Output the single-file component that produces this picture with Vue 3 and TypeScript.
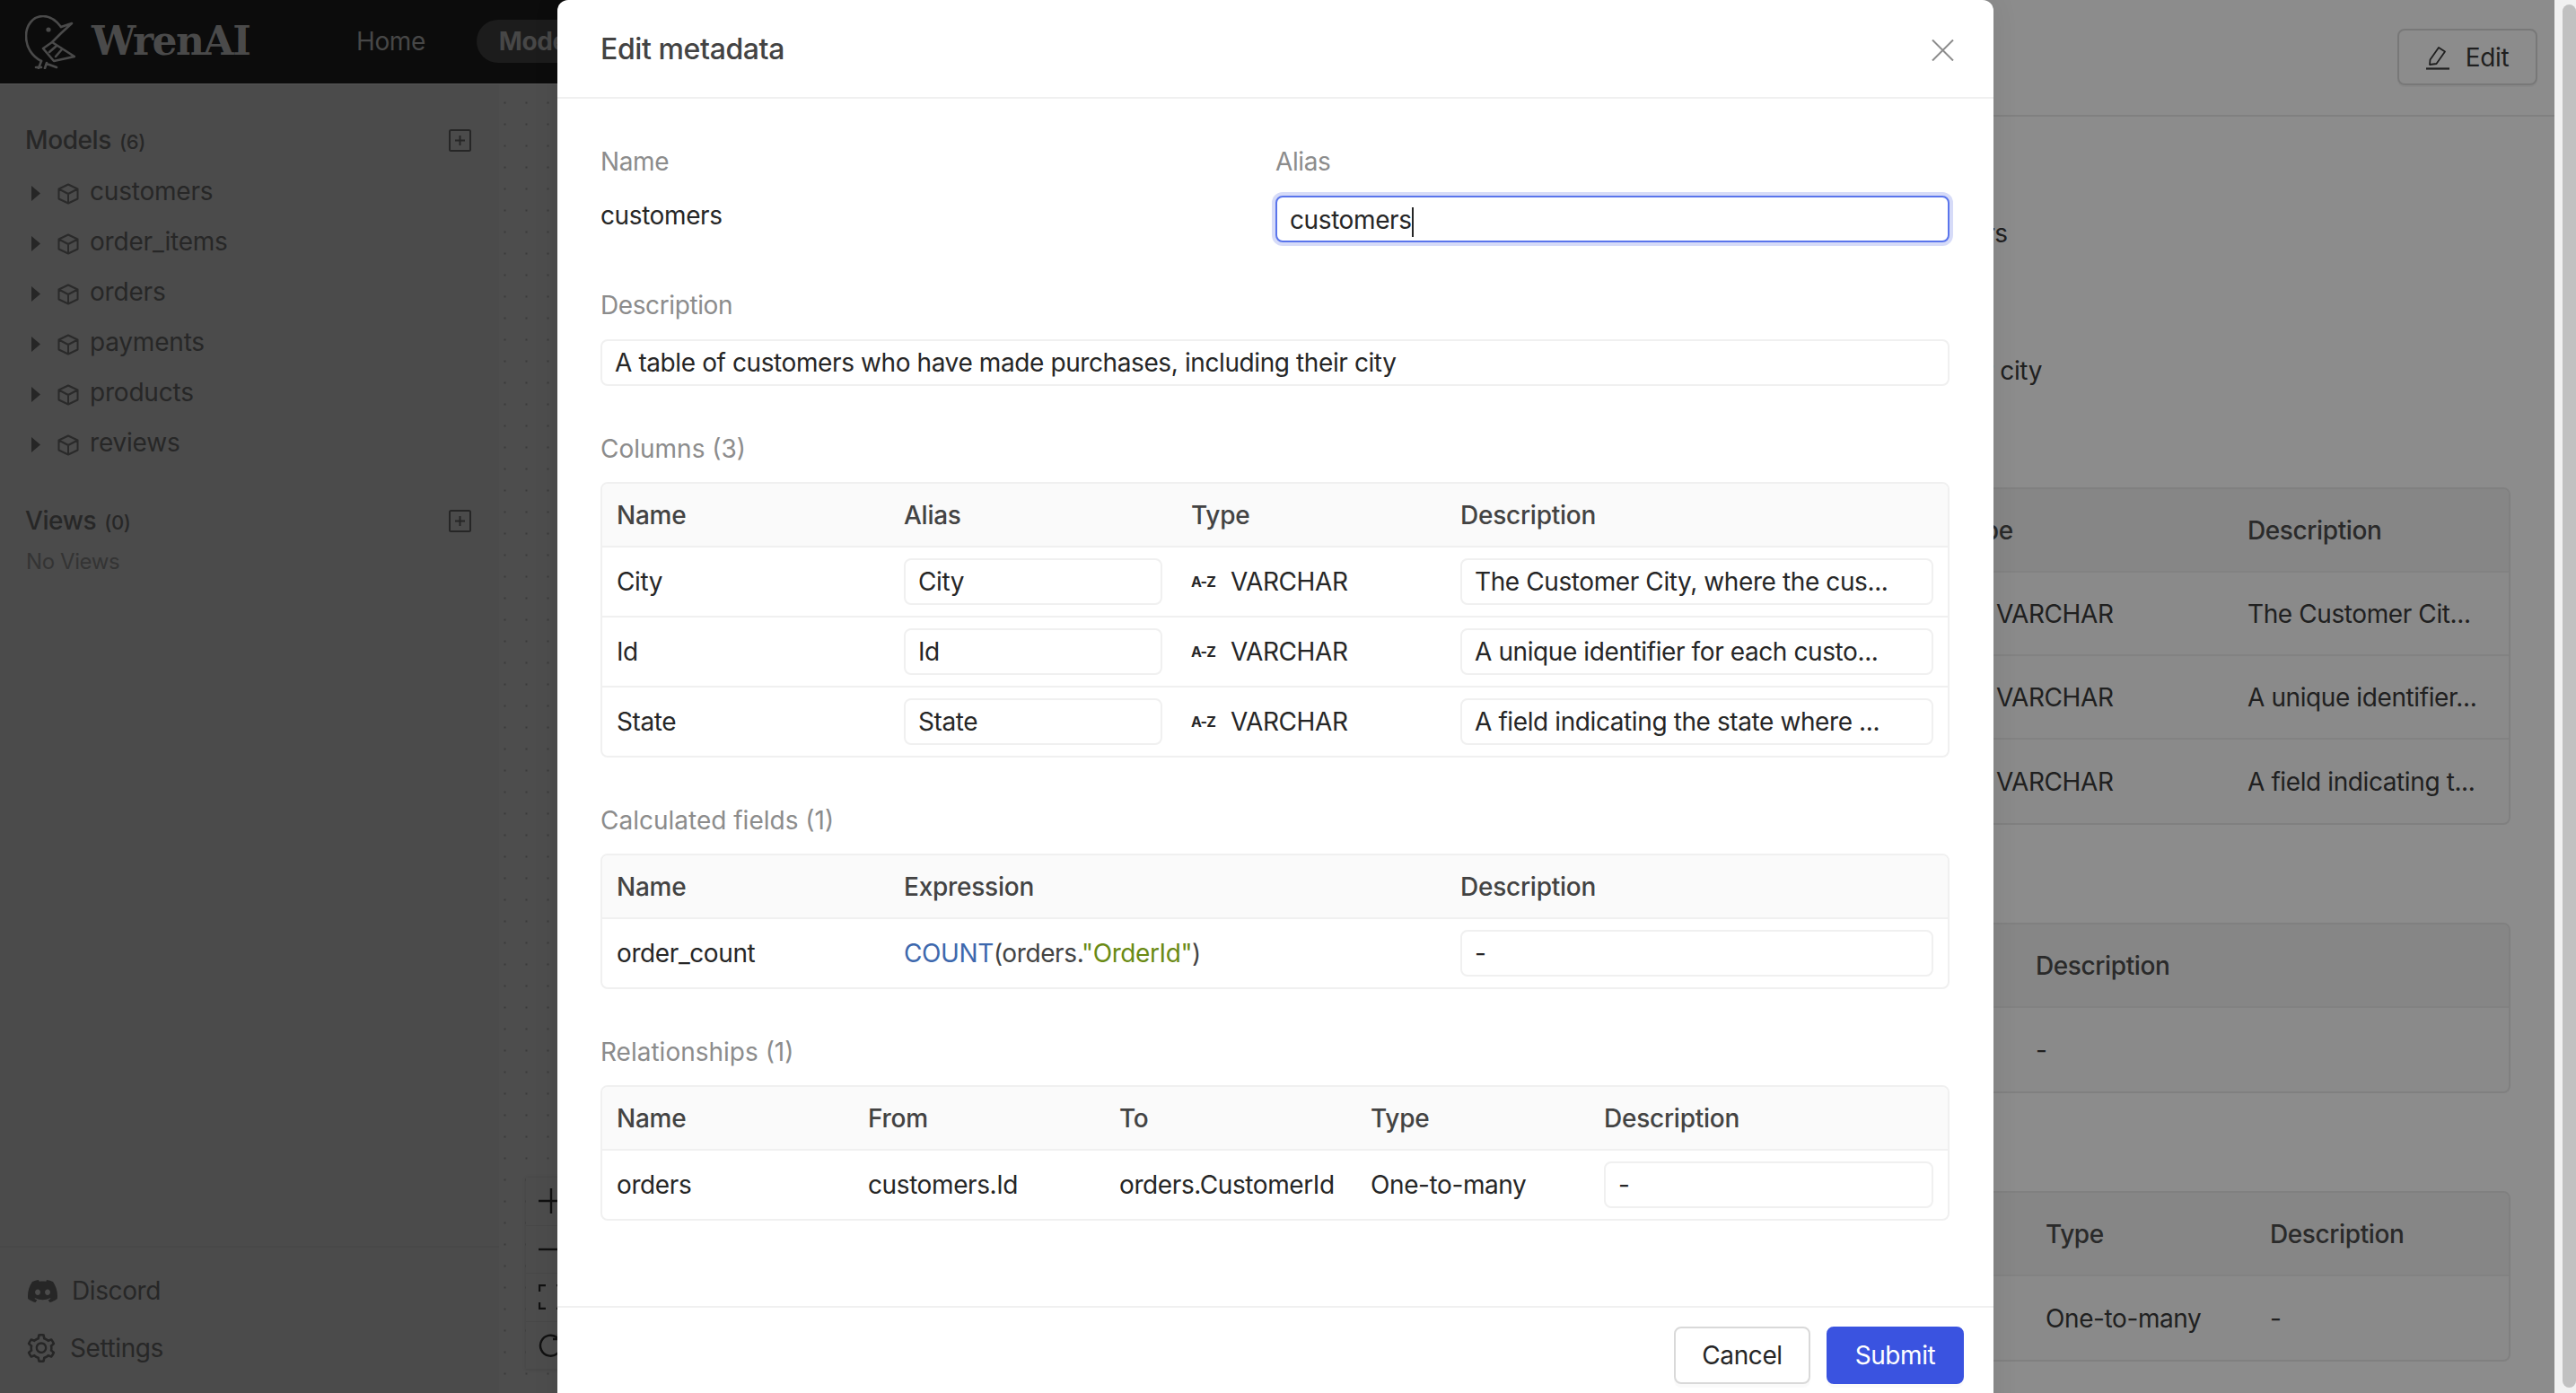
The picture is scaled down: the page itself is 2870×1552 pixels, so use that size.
<template>
  <div class="page">
    <div class="workspace">
      <header class="topbar">
        <div class="brand">
          <svg class="logo" viewBox="28 16 56 60" fill="none" stroke="#4a4a4a" stroke-width="2.6" stroke-linejoin="round" stroke-linecap="round">
            <path d="M68 29C62 21 55 17 48 17C36 17 29 28 29 39C29 52 36 62 46 67" />
            <path d="M68 29L80 25L68 36L58 46L83 62L60 67L48 53L58 46" />
            <path d="M63 50L55 57M69 54L62 62" />
            <path d="M46 67L43 75M52 69L50 75M40 74H46M52 70L63 74" />
            <circle cx="54" cy="32" r="2.6" fill="#4a4a4a" stroke="none" />
          </svg>
          <span class="brand-name">WrenAI</span>
        </div>
        <nav class="nav">
          <a class="nav-item">Home</a>
          <a class="nav-item active">Mode</a>
        </nav>
      </header>
      <div class="workspace-body">
        <aside class="sidebar">
          <div class="tree">
            <div class="tree-head">
              <span>Models <small>(6)</small></span>
              <svg class="add" viewBox="0 0 25 25" fill="none" stroke="#262626" stroke-width="2"><rect x="1" y="1" width="23" height="23" rx="1.5" /><path d="M12.5 7V18M7 12.5H18" /></svg>
            </div>
            <div v-for="m in models" :key="m" class="tree-row">
              <svg class="caret" viewBox="0 0 10 17"><path d="M0 0L10 8.5L0 17Z" fill="#262626" /></svg>
              <svg class="cube" viewBox="0 0 24 24" fill="none" stroke="#2a2a2a" stroke-width="2" stroke-linejoin="round"><path d="M12 1.5L22.5 6.5V17.5L12 22.5L1.5 17.5V6.5ZM1.5 6.5L12 12L22.5 6.5M12 12V22.5" /></svg>
              <span>{{ m }}</span>
            </div>
            <div class="tree-head views">
              <span>Views <small>(0)</small></span>
              <svg class="add" viewBox="0 0 25 25" fill="none" stroke="#262626" stroke-width="2"><rect x="1" y="1" width="23" height="23" rx="1.5" /><path d="M12.5 7V18M7 12.5H18" /></svg>
            </div>
            <div class="no-views">No Views</div>
          </div>
          <div class="side-foot">
            <div class="foot-row">
              <svg class="discord" viewBox="0 0 24 24" fill="#262626"><path d="M20.317 4.3698a19.7913 19.7913 0 00-4.8851-1.5152.0741.0741 0 00-.0785.0371c-.211.3753-.4447.8648-.6083 1.2495-1.8447-.2762-3.68-.2762-5.4868 0-.1636-.3933-.4058-.8742-.6177-1.2495a.077.077 0 00-.0785-.037 19.7363 19.7363 0 00-4.8852 1.515.0699.0699 0 00-.0321.0277C.5334 9.0458-.319 13.5799.0992 18.0578a.0824.0824 0 00.0312.0561c2.0528 1.5076 4.0413 2.4228 5.9929 3.0294a.0777.0777 0 00.0842-.0276c.4616-.6304.8731-1.2952 1.226-1.9942a.076.076 0 00-.0416-.1057c-.6528-.2476-1.2743-.5495-1.8722-.8923a.077.077 0 01-.0076-.1277c.1258-.0943.2517-.1923.3718-.2914a.0743.0743 0 01.0776-.0105c3.9278 1.7933 8.18 1.7933 12.0614 0a.0739.0739 0 01.0785.0095c.1202.099.246.1981.3728.2924a.077.077 0 01-.0066.1276 12.2986 12.2986 0 01-1.873.8914.0766.0766 0 00-.0407.1067c.3604.698.7719 1.3628 1.225 1.9932a.076.076 0 00.0842.0286c1.961-.6067 3.9495-1.5219 6.0023-3.0294a.077.077 0 00.0313-.0552c.5004-5.177-.8382-9.6739-3.5485-13.6604a.061.061 0 00-.0312-.0286zM8.02 15.3312c-1.1825 0-2.1569-1.0857-2.1569-2.419 0-1.3332.9555-2.4189 2.157-2.4189 1.2108 0 2.1757 1.0952 2.1568 2.419 0 1.3332-.9555 2.4189-2.1569 2.4189zm7.9748 0c-1.1825 0-2.1569-1.0857-2.1569-2.419 0-1.3332.9554-2.4189 2.1569-2.4189 1.2108 0 2.1757 1.0952 2.1568 2.419 0 1.3332-.946 2.4189-2.1568 2.4189Z" /></svg>
              <span>Discord</span>
            </div>
            <div class="foot-row">
              <svg class="gear" viewBox="64 64 896 896" fill="#262626"><path d="M924.8 625.7l-65.5-56c3.1-19 4.7-38.4 4.7-57.8s-1.6-38.8-4.7-57.8l65.5-56a32.03 32.03 0 009.3-35.2l-.9-2.6a443.74 443.74 0 00-79.7-137.9l-1.8-2.1a32.12 32.12 0 00-35.1-9.5l-81.3 28.9c-30-24.6-63.5-44-99.7-57.6l-15.7-85a32.05 32.05 0 00-25.8-25.7l-2.7-.5c-52.1-9.4-106.9-9.4-159 0l-2.7.5a32.05 32.05 0 00-25.8 25.7l-15.8 85.4a351.86 351.86 0 00-99 57.4l-81.9-29.1a32 32 0 00-35.1 9.5l-1.8 2.1a446.02 446.02 0 00-79.7 137.9l-.9 2.6c-4.5 12.5-.8 26.5 9.3 35.2l66.3 56.6c-3.1 18.8-4.6 38-4.6 57.1 0 19.2 1.5 38.4 4.6 57.1L99 625.5a32.03 32.03 0 00-9.3 35.2l.9 2.6c18.1 50.4 44.9 96.9 79.7 137.9l1.8 2.1a32.12 32.12 0 0035.1 9.5l81.9-29.1c29.8 24.5 63.1 43.9 99 57.4l15.8 85.4a32.05 32.05 0 0025.8 25.7l2.7.5a449.4 449.4 0 00159 0l2.7-.5a32.05 32.05 0 0025.8-25.7l15.7-85a350 350 0 0099.7-57.6l81.3 28.9a32 32 0 0035.1-9.5l1.8-2.1c34.8-41.1 61.6-87.5 79.7-137.9l.9-2.6c4.5-12.3.8-26.3-9.3-35zM788.3 465.9c2.5 15.1 3.8 30.6 3.8 46.1s-1.3 31-3.8 46.1l-6.6 40.1 74.7 63.9a370.03 370.03 0 01-42.6 73.6L721 702.8l-31.4 25.8c-23.9 19.6-50.5 35-79.3 45.8l-38.1 14.3-17.9 97a377.5 377.5 0 01-85 0l-17.9-97.2-37.8-14.5c-28.5-10.8-55-26.2-78.7-45.7l-31.4-25.9-93.4 33.2c-17-22.9-31.2-47.6-42.6-73.6l75.5-64.5-6.5-40c-2.4-14.9-3.7-30.3-3.7-45.5 0-15.3 1.2-30.6 3.7-45.5l6.5-40-75.5-64.5c11.3-26.1 25.6-50.7 42.6-73.6l93.4 33.2 31.4-25.9c23.7-19.5 50.2-34.9 78.7-45.7l37.9-14.3 17.9-97.2c28.1-3.2 56.8-3.2 85 0l17.9 97 38.1 14.3c28.7 10.8 55.4 26.2 79.3 45.8l31.4 25.8 92.8-32.9c17 22.9 31.2 47.6 42.6 73.6L781.8 426l6.5 39.9zM512 326c-97.2 0-176 78.8-176 176s78.8 176 176 176 176-78.8 176-176-78.8-176-176-176zm79.2 255.2A111.6 111.6 0 01512 614c-29.9 0-58-11.7-79.2-32.8A111.6 111.6 0 01400 502c0-29.9 11.7-58 32.8-79.2C454 401.6 482.1 390 512 390c29.9 0 58 11.6 79.2 32.8A111.6 111.6 0 01624 502c0 29.9-11.7 58-32.8 79.2z" /></svg>
              <span class="settings-label">Settings</span>
            </div>
          </div>
        </aside>
        <main class="canvas">
          <div class="controls">
            <button><svg viewBox="0 0 28 28" fill="none" stroke="#111" stroke-width="2.4"><path d="M14 0V28M0 14H28" /></svg></button>
            <button><svg viewBox="0 0 28 28" fill="none" stroke="#111" stroke-width="2.4"><path d="M0 14H28" /></svg></button>
            <button><svg viewBox="0 0 28 28" fill="none" stroke="#111" stroke-width="2.4"><path d="M8 1H1V8M20 1H27V8M1 20V27H8M27 20V27H20" /></svg></button>
            <button><svg viewBox="0 0 28 28" fill="none" stroke="#111" stroke-width="2.4"><path d="M25 14A11.5 11.5 0 1 1 21 5.500" /><path d="M22 1V7H16" /></svg></button>
          </div>
        </main>
      </div>
    </div>

    <section class="details">
      <div class="details-bar">
        <button class="edit-btn">
          <svg viewBox="0 0 26 28" fill="none" stroke="#1f1f1f" stroke-width="1.8" stroke-linejoin="round"><path d="M4 22L4.500 16.500L14 3L21 7.500L11.500 21Z" /><path d="M0 26.500H26" stroke-width="2.200" /></svg>
          Edit
        </button>
      </div>
      <div class="details-body">
        <div class="d-alias">customers</div>
        <div class="d-desc">including their city</div>

        <div class="d-table first">
          <div class="d-row head cols-type"><span>Type</span><span>Description</span></div>
          <div v-for="c in columns" :key="c.name" class="d-row cols-type">
            <span class="d-type"><i class="az">A-Z</i>VARCHAR</span>
            <span>{{ c.short }}</span>
          </div>
        </div>

        <div class="d-table">
          <div class="d-row head cols-calc-desc"><span>Description</span></div>
          <div class="d-row cols-calc-desc"><span>-</span></div>
        </div>

        <div class="d-table">
          <div class="d-row head cols-rel-desc"><span>Type</span><span>Description</span></div>
          <div class="d-row cols-rel-desc"><span>One-to-many</span><span>-</span></div>
        </div>
      </div>
    </section>

    <div class="scrollbar"><div class="thumb"></div></div>

    <div class="modal">
      <div class="modal-head">
        <span class="modal-title">Edit metadata</span>
        <svg class="close" viewBox="0 0 25 24" fill="none" stroke="#8c8c8c" stroke-width="2"><path d="M1 0.500L24 23.500M24 0.500L1 23.500" /></svg>
      </div>

      <div class="modal-body">
        <div class="pair">
          <div>
            <div class="label">Name</div>
            <div class="plain-value">customers</div>
          </div>
          <div>
            <div class="label">Alias</div>
            <div class="input focused">customers<span class="caret-bar"></span></div>
          </div>
        </div>

        <div class="block">
          <div class="label">Description</div>
          <div class="input">A table of customers who have made purchases, including their city</div>
        </div>

        <div class="block">
          <div class="label tight">Columns (3)</div>
          <div class="table">
            <div class="row head cols-col"><div>Name</div><div>Alias</div><div>Type</div><div>Description</div></div>
            <div v-for="c in columns" :key="c.name" class="row cols-col">
              <div>{{ c.name }}</div>
              <div><div class="input">{{ c.name }}</div></div>
              <div class="type"><span class="az">A-Z</span>VARCHAR</div>
              <div><div class="input">{{ c.long }}</div></div>
            </div>
          </div>
        </div>

        <div class="block">
          <div class="label tight">Calculated fields (1)</div>
          <div class="table">
            <div class="row head cols-calc"><div>Name</div><div>Expression</div><div>Description</div></div>
            <div class="row cols-calc">
              <div>order_count</div>
              <div class="expr"><span class="fn">COUNT</span>(orders.<span class="str">"OrderId"</span>)</div>
              <div><div class="input">-</div></div>
            </div>
          </div>
        </div>

        <div class="block">
          <div class="label tight">Relationships (1)</div>
          <div class="table">
            <div class="row head cols-rel"><div>Name</div><div>From</div><div>To</div><div>Type</div><div>Description</div></div>
            <div class="row cols-rel">
              <div>orders</div>
              <div>customers.Id</div>
              <div>orders.CustomerId</div>
              <div>One-to-many</div>
              <div><div class="input">-</div></div>
            </div>
          </div>
        </div>
      </div>

      <div class="modal-foot">
        <button class="btn">Cancel</button>
        <button class="btn primary">Submit</button>
      </div>
    </div>
  </div>
</template>

<script setup lang="ts">
interface Column {
  name: string;
  long: string;
  short: string;
}

const models: string[] = ['customers', 'order_items', 'orders', 'payments', 'products', 'reviews'];

const columns: Column[] = [
  { name: 'City', long: 'The Customer City, where the cus...', short: 'The Customer Cit...' },
  { name: 'Id', long: 'A unique identifier for each custo...', short: 'A unique identifier...' },
  { name: 'State', long: 'A field indicating the state where ...', short: 'A field indicating t...' },
];
</script>

<style>
html, body {
  margin: 0;
  height: 100%;
  overflow: hidden;
}
</style>

<style scoped>
.page {
  position: relative;
  display: flex;
  width: 2870px;
  height: 1552px;
  overflow: hidden;
  font-family: Inter, "Liberation Sans", sans-serif;
  font-size: 28px;
  line-height: 36px;
  letter-spacing: -0.4px;
  color: #262626;
}

/* dimmed app behind the modal */
.workspace {
  flex: none;
  width: 1356px;
  display: flex;
  flex-direction: column;
  background: #4c4c4c;
}
.topbar {
  flex: none;
  height: 93px;
  display: flex;
  align-items: center;
  background: #0c0c0c;
  border-bottom: 1px solid #555;
}
.brand {
  flex: none;
  width: 372px;
  box-sizing: border-box;
  padding-left: 28px;
  display: flex;
  align-items: center;
  gap: 18px;
}
.logo {
  width: 56px;
  height: 60px;
  flex: none;
}
.brand-name {
  font-family: "DejaVu Serif", "Liberation Serif", serif;
  font-weight: 700;
  font-size: 44px;
  letter-spacing: -1.5px;
  line-height: 60px;
  color: #4a4a4a;
  margin-top: -2px;
}
.nav {
  display: flex;
  gap: 32px;
  margin-top: -1px;
}
.nav-item {
  padding: 6px 25px;
  border-radius: 24px;
  color: #474747;
}
.nav-item.active {
  background: #1c1c1c;
  font-weight: 700;
  width: 120px;
}
.workspace-body {
  flex: 1;
  display: flex;
  min-height: 0;
}
.sidebar {
  flex: none;
  width: 556px;
  display: flex;
  flex-direction: column;
  justify-content: space-between;
  background: #4b4b4b;
  color: #272727;
}
.tree {
  padding: 43px 31px 0 28px;
}
.tree-head {
  display: flex;
  align-items: center;
  justify-content: space-between;
  height: 40px;
  margin-bottom: 8px;
  font-weight: 500;
}
.tree-head small {
  font-size: 22px;
  margin-left: 2px;
}
.tree-head.views {
  margin-top: 40px;
  margin-bottom: 7px;
}
.add {
  width: 25px;
  height: 25px;
  margin-top: -2px;
}
.tree-row {
  display: flex;
  align-items: center;
  height: 56px;
  padding-left: 7px;
  letter-spacing: -0.2px;
}
.caret {
  width: 10px;
  height: 17px;
  margin-top: 4px;
  margin-right: 19px;
}
.cube {
  width: 24px;
  height: 24px;
  margin-top: 5px;
  margin-right: 12px;
}
.no-views {
  font-size: 24px;
  color: #343434;
  padding-left: 1px;
}
.side-foot {
  border-top: 2px solid #484848;
  padding: 30px 0 32px 31px;
  display: flex;
  flex-direction: column;
  gap: 28px;
}
.foot-row {
  display: flex;
  align-items: center;
  height: 36px;
}
.discord {
  width: 33px;
  height: 33px;
  margin-right: 16px;
}
.gear {
  width: 32px;
  height: 32px;
  margin-left: -1px;
  margin-right: 16px;
}
.canvas {
  position: relative;
  flex: 1;
  background-color: #4d4d4d;
  background-image: radial-gradient(circle, #3a3a3a 1px, transparent 1.5px);
  background-size: 24px 24px;
  background-position: -5.5px 8.5px;
}
.controls {
  position: absolute;
  left: 30px;
  top: 1218px;
  width: 56px;
  display: flex;
  flex-direction: column;
  background: #4c4c4c;
  box-shadow: 0 0 4px rgba(0, 0, 0, 0.12);
}
.controls button {
  height: 53.5px;
  padding: 0;
  border: none;
  border-bottom: 1px solid #474747;
  background: none;
  display: flex;
  align-items: center;
  justify-content: center;
}
.controls svg {
  width: 28px;
  height: 28px;
}

/* right side of the page, mostly hidden by the modal */
.details {
  flex: 1;
  min-width: 0;
  background: #8c8c8c;
  color: #202020;
}
.details-bar {
  height: 128px;
  display: flex;
  justify-content: flex-end;
  align-items: flex-start;
  padding-right: 19px;
  border-bottom: 2px solid #808080;
}
.edit-btn {
  width: 156px;
  height: 63px;
  margin-top: 32px;
  display: flex;
  align-items: center;
  justify-content: center;
  gap: 18px;
  border: 2px solid #787878;
  border-radius: 8px;
  background: transparent;
  font: inherit;
  letter-spacing: inherit;
  color: #1f1f1f;
  box-shadow: 0 2px 0 rgba(0, 0, 0, 0.03);
}
.edit-btn svg {
  width: 26px;
  height: 28px;
}
.details-body {
  padding: 110px 49px 0 48px;
}
.d-alias {
  height: 40px;
  line-height: 40px;
  padding-left: 697px;
  white-space: nowrap;
}
.d-desc {
  height: 40px;
  line-height: 40px;
  margin-top: 113px;
  width: 871px;
  text-align: right;
  white-space: nowrap;
}
.d-table {
  margin-top: 109px;
  border: 2px solid #808080;
  border-radius: 8px;
  background: #8a8a8a;
  overflow: hidden;
}
.d-table.first {
  margin-top: 110px;
}
.d-row {
  display: grid;
  align-items: center;
  height: 93px;
  box-sizing: border-box;
  border-bottom: 2px solid #828282;
}
.d-row:last-child {
  border-bottom: none;
}
.d-row.head {
  background: #868686;
  font-weight: 500;
  color: #2a2a2a;
}
.d-row > span {
  padding-left: 32px;
  white-space: nowrap;
}
.cols-type {
  padding-left: 740px;
  grid-template-columns: 326px 1fr;
}
.cols-calc-desc {
  padding-left: 830px;
  grid-template-columns: 1fr;
}
.cols-rel-desc {
  padding-left: 841px;
  grid-template-columns: 250px 1fr;
}
.d-type {
  display: flex;
  align-items: center;
}
.d-type .az {
  margin-right: 18px;
}
.az {
  flex: none;
  font-style: normal;
  font-size: 16px;
  font-weight: 700;
  letter-spacing: -0.8px;
  line-height: 20px;
  width: 28px;
  color: #262626;
}

.scrollbar {
  flex: none;
  width: 24px;
  background: #f1f1f1;
  box-sizing: border-box;
  padding: 5px 0 6px 9px;
}
.thumb {
  height: 100%;
  border-radius: 8px;
  background: #c1c1c1;
}

/* modal */
.modal {
  position: absolute;
  left: 621px;
  top: 0;
  width: 1600px;
  background: #fff;
  border-radius: 12px 12px 0 0;
  box-shadow: 0 0 30px rgba(0, 0, 0, 0.08);
  color: #262626;
}
.modal-head {
  height: 108px;
  display: flex;
  align-items: center;
  justify-content: space-between;
  padding: 0 44px 0 48px;
  border-bottom: 2px solid #f0f0f0;
}
.modal-title {
  font-size: 32px;
  font-weight: 500;
  color: #434343;
  margin-top: 2px;
}
.close {
  width: 25px;
  height: 24px;
  margin-top: 4px;
}
.modal-body {
  padding: 52px 49px 95px 48px;
}
.pair {
  display: grid;
  grid-template-columns: 752px 1fr;
}
.label {
  color: #8c8c8c;
  margin-bottom: 20px;
}
.label.tight {
  margin-bottom: 19px;
  letter-spacing: 0;
}
.plain-value {
  padding-top: 4px;
}
.block {
  margin-top: 52px;
}
.input {
  box-sizing: border-box;
  height: 52px;
  line-height: 48px;
  padding: 0 14px;
  border: 2px solid #f0f0f0;
  border-radius: 8px;
  background: #fff;
  white-space: nowrap;
  overflow: hidden;
}
.input.focused {
  border-color: #5a75ec;
  box-shadow: 0 0 0 4px #d6dbf8;
  overflow: visible;
  line-height: 50px;
}
.caret-bar {
  display: inline-block;
  width: 2px;
  height: 33px;
  vertical-align: middle;
  background: #262626;
}
.table {
  border: 2px solid #f0f0f0;
  border-radius: 8px;
  overflow: hidden;
}
.row {
  display: grid;
  align-items: center;
  box-sizing: border-box;
  height: 78px;
  border-bottom: 2px solid #f0f0f0;
}
.row:last-child {
  height: 76px;
  border-bottom: none;
}
.row > div {
  padding: 0 16px;
  min-width: 0;
}
.row.head {
  height: 71px;
  background: #fafafa;
  font-weight: 500;
  letter-spacing: -0.25px;
  color: #434343;
}
.cols-col { grid-template-columns: 320px 320px 300px 1fr; }
.cols-calc { grid-template-columns: 320px 620px 1fr; }
.cols-rel { grid-template-columns: 280px 280px 280px 260px 1fr; }
.type {
  display: flex;
  align-items: center;
}
.type .az {
  margin-right: 16px;
}
.expr {
  white-space: nowrap;
  color: #434343;
}
.fn {
  color: #3d68ad;
}
.str {
  color: #6a8a14;
}
.modal-foot {
  display: flex;
  justify-content: flex-end;
  gap: 18px;
  padding: 21px 33px 40px 0;
  border-top: 2px solid #f0f0f0;
}
.btn {
  width: 152px;
  height: 64px;
  box-sizing: border-box;
  border: 2px solid #d9d9d9;
  border-radius: 8px;
  background: #fff;
  font: inherit;
  letter-spacing: inherit;
  color: #262626;
  box-shadow: 0 4px 0 rgba(0, 0, 0, 0.02);
}
.btn.primary {
  width: 153px;
  border-color: #3a53e0;
  background: #3a53e0;
  color: #fff;
}
</style>
